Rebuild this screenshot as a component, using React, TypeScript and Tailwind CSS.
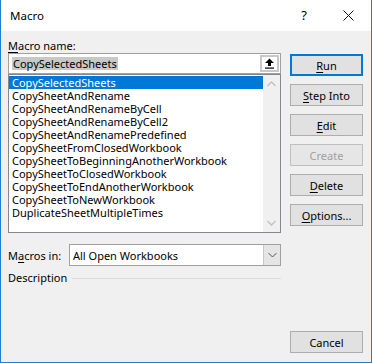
import React from 'react';

const MACROS = [
  'CopySelectedSheets',
  'CopySheetAndRename',
  'CopySheetAndRenameByCell',
  'CopySheetAndRenameByCell2',
  'CopySheetAndRenamePredefined',
  'CopySheetFromClosedWorkbook',
  'CopySheetToBeginningAnotherWorkbook',
  'CopySheetToClosedWorkbook',
  'CopySheetToEndAnotherWorkbook',
  'CopySheetToNewWorkbook',
  'DuplicateSheetMultipleTimes',
];

function Btn({ label, u, primary, disabled }: { label: string; u?: number; primary?: boolean; disabled?: boolean }) {
  const text =
    u === undefined ? (
      label
    ) : (
      <>
        {label.slice(0, u)}
        <span className="underline underline-offset-2">{label[u]}</span>
        {label.slice(u + 1)}
      </>
    );
  return (
    <div
      className={`h-[22px] w-[73px] flex items-center justify-center ${
        primary
          ? 'border-2 border-[#0078d7] bg-[#e1e1e1]'
          : disabled
          ? 'border border-[#bfbfbf] bg-[#e6e6e6]'
          : 'border border-[#adadad] bg-[#e1e1e1]'
      } ${disabled ? 'text-[#a0a0a0]' : 'text-black'}`}
    >
      {text}
    </div>
  );
}

function Chevron({ up }: { up?: boolean }) {
  return (
    <svg width="9" height="6" viewBox="0 0 9 6">
      <path d={up ? 'M0.5 5 L4.5 1 L8.5 5' : 'M0.5 1 L4.5 5 L8.5 1'} stroke="#c0c0c0" strokeWidth="1.3" fill="none" />
    </svg>
  );
}

export default function App() {
  return (
    <div
      className="w-[372px] h-[363px] flex flex-col border-x border-b border-[#1c7fd6] bg-[#f0f0f0] text-[11px] leading-[13px] text-black overflow-hidden"
      style={{ fontFamily: '"Noto Sans", "Open Sans", sans-serif' }}
    >
      {/* title bar */}
      <div className="h-[31px] bg-white flex items-center shrink-0">
        <span className="ml-[9px] text-[11.5px]">Macro</span>
        <span className="ml-auto mr-[36px] text-[13px]">?</span>
        <svg width="11" height="11" viewBox="0 0 11 11" className="mr-[17px]">
          <path d="M0.5 0.5 L10.5 10.5 M10.5 0.5 L0.5 10.5" stroke="#111" strokeWidth="1" />
        </svg>
      </div>

      <div className="flex flex-1 pl-[7px] pr-[8px]">
        {/* left column */}
        <div className="w-[273px] flex flex-col">
          <div className="mt-[8px] h-[14px]">
            <span className="underline underline-offset-2">M</span>acro name:
          </div>
          <div className="h-[21px] bg-white border border-[#a0a0a0] flex items-center pl-[3px]">
            <span className="bg-[#c8c8c8] leading-[13px] px-[1px]">CopySelectedSheets</span>
            <div className="ml-auto mr-[1px] w-[19px] h-[17px] border-2 border-[#c8c8c8] bg-white flex items-center justify-center">
              <svg width="11" height="11" viewBox="0 0 11 11">
                <path d="M5.5 0.5 L10 5 L7 5 L7 8 L4 8 L4 5 L1 5 Z" fill="#000" />
                <rect x="1" y="9.5" width="9" height="1.2" fill="#000" />
              </svg>
            </div>
          </div>
          <div className="h-[159px] bg-white border border-[#828790] flex">
            <div className="flex-1 flex flex-col pt-[1px]">
              {MACROS.map((m, i) => (
                <div
                  key={m}
                  className={`h-[13px] pl-[3px] flex items-center ${i === 0 ? 'bg-[#0078d7] text-white' : ''}`}
                >
                  {m}
                </div>
              ))}
            </div>
            <div className="w-[17px] bg-[#f0f0f0] flex flex-col items-center justify-between py-[6px]">
              <Chevron up />
              <Chevron />
            </div>
          </div>

          <div className="mt-[11px] flex items-center">
            <span className="w-[61px]">
              M<span className="underline underline-offset-2">a</span>cros in:
            </span>
            <div className="flex-1 h-[22px] bg-white border border-[#a0a0a0] flex items-center pl-[3px]">
              <span>All Open Workbooks</span>
              <div className="ml-auto w-[17px] h-full bg-[#e5e5e5] border-l border-[#c8c8c8] flex items-center justify-center">
                <svg width="9" height="6" viewBox="0 0 9 6">
                  <path d="M0.5 1 L4.5 5 L8.5 1" stroke="#555" strokeWidth="1" fill="none" />
                </svg>
              </div>
            </div>
          </div>

          <div className="mt-[5px] flex items-center">
            <span className="h-[14px]">Description</span>
            <div className="flex-1 ml-[5px] h-px bg-[#dcdcdc]" />
          </div>
        </div>

        {/* right column */}
        <div className="ml-[9px] w-[73px] flex flex-col pb-[9px]">
          <div className="mt-[23px] flex flex-col gap-[8px]">
            <Btn label="Run" u={0} primary />
            <Btn label="Step Into" u={0} />
            <Btn label="Edit" u={0} />
            <Btn label="Create" disabled />
            <Btn label="Delete" u={0} />
            <Btn label="Options..." u={0} />
          </div>
          <div className="mt-auto">
            <Btn label="Cancel" />
          </div>
        </div>
      </div>
    </div>
  );
}
